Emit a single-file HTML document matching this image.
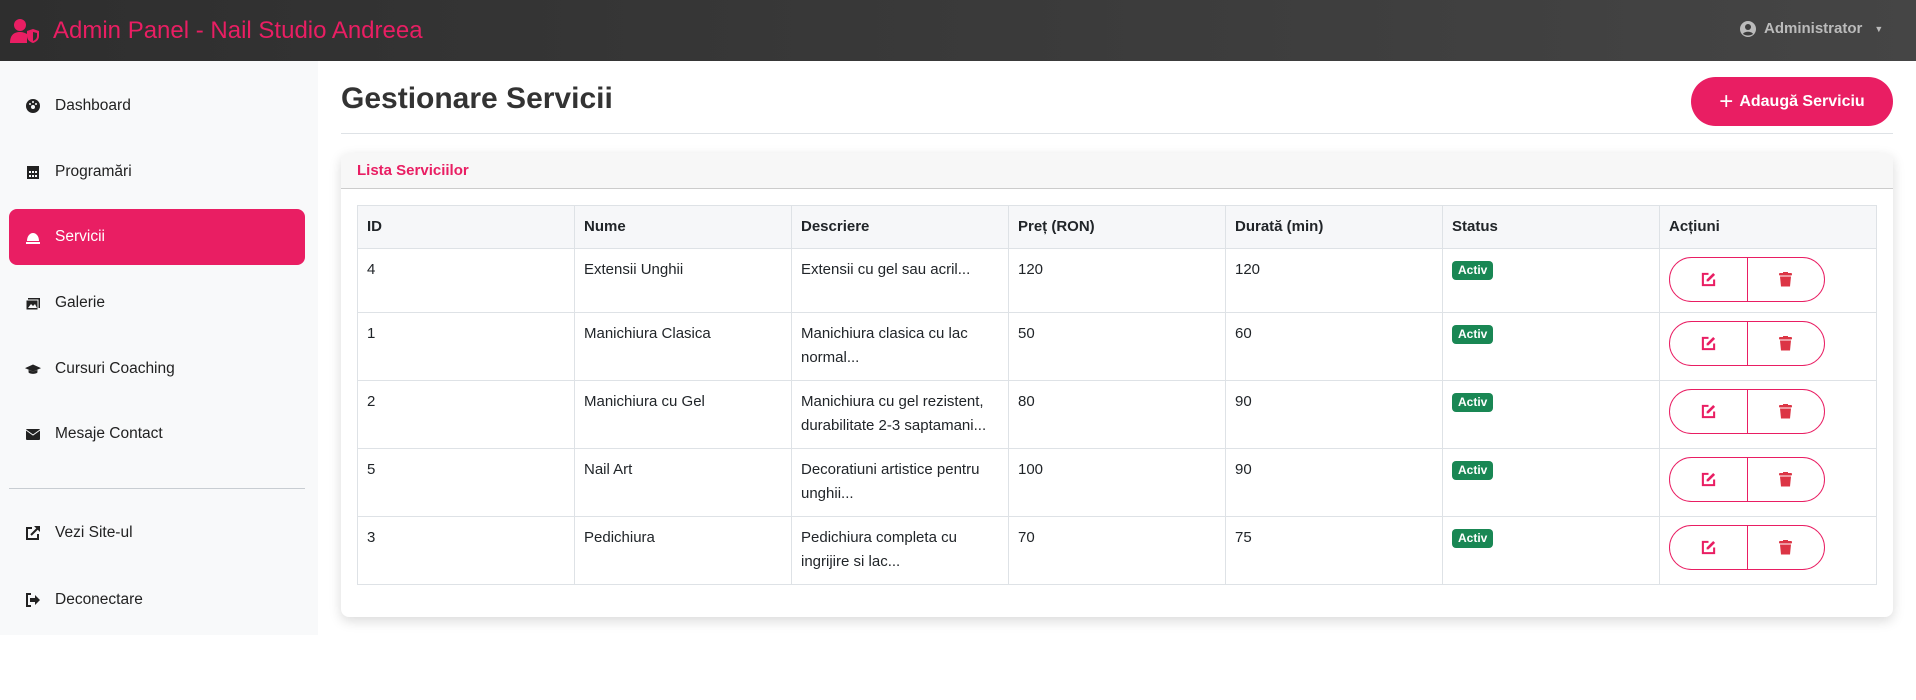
<!DOCTYPE html>
<html><head><meta charset="utf-8"><style>
*{box-sizing:border-box;margin:0;padding:0}
body{width:1916px;height:700px;overflow:hidden;background:#fff;font-family:"Liberation Sans",sans-serif;color:#212529;font-size:16px;position:relative}
.nav{position:absolute;left:0;top:0;width:1916px;height:61px;background:linear-gradient(90deg,#2e2e2e,#454545)}
.brand{position:absolute;left:10px;top:17px;color:#e91e63;font-size:24px;display:flex;align-items:center;gap:13px}
.admin{position:absolute;left:1740px;top:20px;color:#bbb;font-size:15px;font-weight:bold;display:flex;align-items:center;gap:8px}
.side{position:absolute;left:0;top:61px;width:318px;height:574px;background:#f8f9fa}
.item{position:absolute;left:9px;width:296px;height:56px;display:flex;align-items:center;padding-left:16px;gap:14px;font-size:15.5px;color:#222}
.item.act{background:#e91e63;color:#fff;border-radius:8px}
.item svg{width:16px;height:16px}
.hr{position:absolute;left:9px;width:296px;top:427px;border-top:1px solid #c8cdd2}
h1{position:absolute;left:341px;top:82px;font-size:30px;font-weight:bold;color:#333}
.tline{position:absolute;left:341px;top:133px;width:1552px;border-top:1px solid #dee2e6}
.btn{position:absolute;left:1691px;top:77px;width:202px;height:49px;border-radius:25px;background:#e91e63;color:#fff;font-weight:bold;font-size:16px;display:flex;align-items:center;justify-content:center;gap:6px}
.card{position:absolute;left:341px;top:153px;width:1552px;height:464px;border-radius:8px;box-shadow:0 4px 12px rgba(0,0,0,.15);background:#fff;overflow:hidden}
.ch{height:36px;background:#f7f7f7;border-bottom:1px solid #ccc;color:#e91e63;font-weight:bold;font-size:15px;padding:9px 16px}
table{position:absolute;left:16px;top:52px;width:1520px;border-collapse:collapse;font-size:15px}
td,th{border:1px solid #dee2e6;padding:9px 9px;vertical-align:top;text-align:left;line-height:24px;width:217px}
th{background:#f6f7f9;font-weight:bold;height:42px}
tr.r1 td{height:64px}
tr.r td{height:68px}
.badge{display:inline-block;background:#198754;color:#fff;font-size:12px;font-weight:bold;padding:2px 6px;border-radius:4px;line-height:15px;margin-top:3px}
.grp{display:flex;width:156px;height:45px;border:1.5px solid #e91e63;border-radius:23px;margin-top:-1px}
.grp div{flex:1;display:flex;align-items:center;justify-content:center}
.grp div:first-child{border-right:1.5px solid #e91e63}
</style></head><body>
<div class="nav">
<div class="brand"><svg width="30" height="26" viewBox="0 0 30 26"><circle cx="10" cy="7" r="6" fill="#e91e63"/><path d="M0 25c0-8 4-11 10-11 3 0 5 1 7 2v9z" fill="#e91e63"/><path d="M17 13l6-2 6 2v5c0 4-3 6-6 7-3-1-6-3-6-7z" fill="#e91e63"/><path d="M23 14v9c2-1 4-2 4-5v-3z" fill="#2e2e2e"/></svg>Admin Panel - Nail Studio Andreea</div>
<div class="admin"><svg width="16" height="16" viewBox="0 0 16 16"><circle cx="8" cy="8" r="8" fill="#bbb"/><circle cx="8" cy="6" r="3" fill="#3c3c3c"/><path d="M3 13c1-3 9-3 10 0-3 2-7 2-10 0z" fill="#3c3c3c"/></svg>Administrator <span style="font-size:9px;margin-left:4px">▼</span></div>
</div>
<div class="side">
<div class="item" style="top:17px"><svg viewBox="0 0 16 16"><circle cx="8" cy="8" r="7" fill="#222"/><circle cx="8" cy="9" r="2" fill="#f8f9fa"/><circle cx="5" cy="6" r="1" fill="#f8f9fa"/><circle cx="8" cy="4" r="1" fill="#f8f9fa"/><circle cx="11" cy="6" r="1" fill="#f8f9fa"/></svg>Dashboard</div>
<div class="item" style="top:83px"><svg viewBox="0 0 16 16"><rect x="2" y="2" width="12" height="13" fill="#222"/><g fill="#f8f9fa"><rect x="4" y="7" width="2" height="2"/><rect x="7" y="7" width="2" height="2"/><rect x="10" y="7" width="2" height="2"/><rect x="4" y="11" width="2" height="2"/><rect x="7" y="11" width="2" height="2"/><rect x="10" y="11" width="2" height="2"/></g></svg>Programări</div>
<div class="item act" style="top:148px"><svg viewBox="0 0 16 16"><path d="M2 12c0-5 3-8 6-8s6 3 6 8z" fill="#fff"/><rect x="1" y="13" width="14" height="2" fill="#fff"/></svg>Servicii</div>
<div class="item" style="top:214px"><svg viewBox="0 0 16 16"><rect x="3" y="3" width="12" height="10" fill="#222"/><rect x="1" y="5" width="12" height="10" fill="#222" stroke="#f8f9fa"/><path d="M3 13l3-4 2 2 2-2 2 4z" fill="#f8f9fa"/></svg>Galerie</div>
<div class="item" style="top:280px"><svg viewBox="0 0 18 16"><path d="M9 3l9 4-9 4-9-4z" fill="#222"/><path d="M4 9v3c2 2 8 2 10 0V9l-5 2z" fill="#222"/></svg>Cursuri Coaching</div>
<div class="item" style="top:345px"><svg viewBox="0 0 16 16"><rect x="1" y="3" width="14" height="11" rx="1" fill="#222"/><path d="M1 4l7 5 7-5" stroke="#f8f9fa" fill="none"/></svg>Mesaje Contact</div>
<div class="hr"></div>
<div class="item" style="top:444px"><svg viewBox="0 0 16 16"><path d="M7 3H2v11h11V9" stroke="#222" stroke-width="2" fill="none"/><path d="M9 1h6v6z" fill="#222"/><path d="M6 10l8-8" stroke="#222" stroke-width="2"/></svg>Vezi Site-ul</div>
<div class="item" style="top:511px"><svg viewBox="0 0 16 16"><path d="M6 2H2v12h4" stroke="#222" stroke-width="2" fill="none"/><path d="M10 3l5 5-5 5V10H5V6h5z" fill="#222"/></svg>Deconectare</div>
</div>
<h1>Gestionare Servicii</h1>
<div class="tline"></div>
<div class="btn"><span style="font-size:24px;font-weight:normal">+</span>Adaugă Serviciu</div>
<div class="card"><div class="ch">Lista Serviciilor</div>
<table>
<tr><th>ID</th><th>Nume</th><th>Descriere</th><th>Preț (RON)</th><th>Durată (min)</th><th>Status</th><th>Acțiuni</th></tr>
<tr class="r1"><td>4</td><td>Extensii Unghii</td><td>Extensii cu gel sau acril...</td><td>120</td><td>120</td><td><span class="badge">Activ</span></td><td><div class="grp"><div><svg width="15" height="15" viewBox="0 0 16 16"><path d="M8 2H2v12h12V8" stroke="#e91e63" stroke-width="2.2" fill="none"/><path d="M13 1l2 2-7 7H6V8z" fill="#e91e63"/></svg></div><div><svg width="13" height="15" viewBox="0 0 13 15"><rect x="0" y="1" width="13" height="2.5" rx="1" fill="#dc3545"/><rect x="4" y="0" width="5" height="2" fill="#dc3545"/><path d="M1 4.5h11l-1 10H2z" fill="#dc3545"/></svg></div></div></td></tr>
<tr class="r"><td>1</td><td>Manichiura Clasica</td><td>Manichiura clasica cu lac normal...</td><td>50</td><td>60</td><td><span class="badge">Activ</span></td><td><div class="grp"><div><svg width="15" height="15" viewBox="0 0 16 16"><path d="M8 2H2v12h12V8" stroke="#e91e63" stroke-width="2.2" fill="none"/><path d="M13 1l2 2-7 7H6V8z" fill="#e91e63"/></svg></div><div><svg width="13" height="15" viewBox="0 0 13 15"><rect x="0" y="1" width="13" height="2.5" rx="1" fill="#dc3545"/><rect x="4" y="0" width="5" height="2" fill="#dc3545"/><path d="M1 4.5h11l-1 10H2z" fill="#dc3545"/></svg></div></div></td></tr>
<tr class="r"><td>2</td><td>Manichiura cu Gel</td><td>Manichiura cu gel rezistent, durabilitate 2-3 saptamani...</td><td>80</td><td>90</td><td><span class="badge">Activ</span></td><td><div class="grp"><div><svg width="15" height="15" viewBox="0 0 16 16"><path d="M8 2H2v12h12V8" stroke="#e91e63" stroke-width="2.2" fill="none"/><path d="M13 1l2 2-7 7H6V8z" fill="#e91e63"/></svg></div><div><svg width="13" height="15" viewBox="0 0 13 15"><rect x="0" y="1" width="13" height="2.5" rx="1" fill="#dc3545"/><rect x="4" y="0" width="5" height="2" fill="#dc3545"/><path d="M1 4.5h11l-1 10H2z" fill="#dc3545"/></svg></div></div></td></tr>
<tr class="r"><td>5</td><td>Nail Art</td><td>Decoratiuni artistice pentru unghii...</td><td>100</td><td>90</td><td><span class="badge">Activ</span></td><td><div class="grp"><div><svg width="15" height="15" viewBox="0 0 16 16"><path d="M8 2H2v12h12V8" stroke="#e91e63" stroke-width="2.2" fill="none"/><path d="M13 1l2 2-7 7H6V8z" fill="#e91e63"/></svg></div><div><svg width="13" height="15" viewBox="0 0 13 15"><rect x="0" y="1" width="13" height="2.5" rx="1" fill="#dc3545"/><rect x="4" y="0" width="5" height="2" fill="#dc3545"/><path d="M1 4.5h11l-1 10H2z" fill="#dc3545"/></svg></div></div></td></tr>
<tr class="r"><td>3</td><td>Pedichiura</td><td>Pedichiura completa cu ingrijire si lac...</td><td>70</td><td>75</td><td><span class="badge">Activ</span></td><td><div class="grp"><div><svg width="15" height="15" viewBox="0 0 16 16"><path d="M8 2H2v12h12V8" stroke="#e91e63" stroke-width="2.2" fill="none"/><path d="M13 1l2 2-7 7H6V8z" fill="#e91e63"/></svg></div><div><svg width="13" height="15" viewBox="0 0 13 15"><rect x="0" y="1" width="13" height="2.5" rx="1" fill="#dc3545"/><rect x="4" y="0" width="5" height="2" fill="#dc3545"/><path d="M1 4.5h11l-1 10H2z" fill="#dc3545"/></svg></div></div></td></tr>
</table></div>
</body></html>
